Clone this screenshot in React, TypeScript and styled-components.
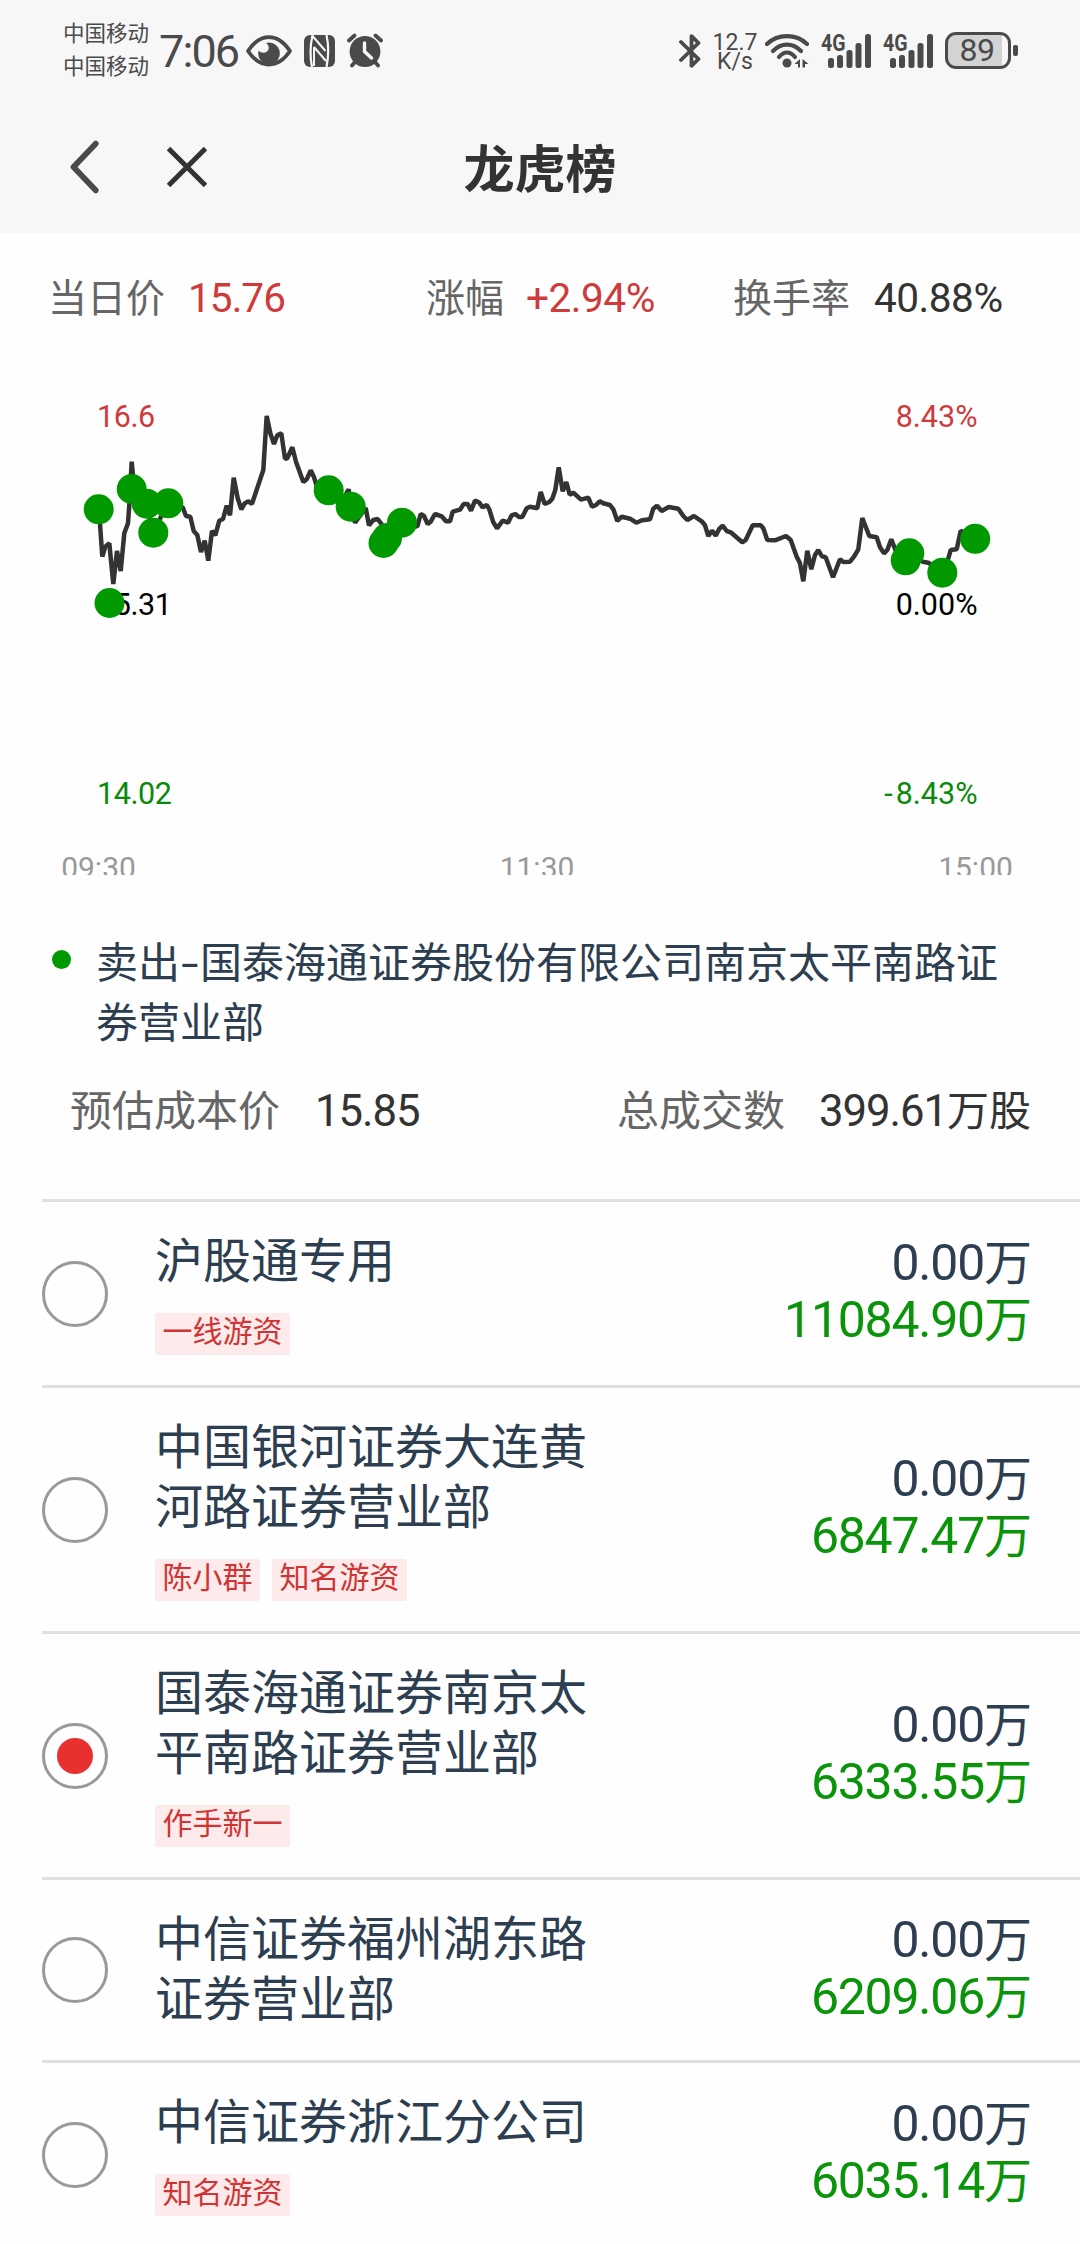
import React from "react";
import styled, { createGlobalStyle } from "styled-components";

const GlobalStyle = createGlobalStyle`
  * { box-sizing: border-box; }
  body {
    margin: 0;
    background: #fefefe;
    font-family: Roboto, "Noto Sans CJK SC", sans-serif;
    color: #2c3e50;
  }
`;

const Screen = styled.div`
  width: 1080px;
  height: 2244px;
  overflow: hidden;
  display: flex;
  flex-direction: column;
`;

const Top = styled.header`
  flex: none;
  height: 233px;
  background: #f7f7f7;
`;

const StatusBar = styled.div`
  display: flex;
  justify-content: space-between;
  height: 101px;
  padding: 0 62px 0 63px;
  color: #4a4a4a;
`;

const StatusGroup = styled.div`
  display: flex;
  align-items: center;
`;

const Carriers = styled.div`
  width: 96px;
  font-size: 21.5px;
  line-height: 33px;
  padding-bottom: 1px;
`;

const Clock = styled.div`
  width: 87px;
  font-size: 45px;
  line-height: 50px;
  letter-spacing: -1.9px;
  padding-top: 2px;
`;

const StatusIcon = styled.svg<{ $gap: number }>`
  display: block;
  flex: none;
  margin-left: ${(p) => p.$gap}px;
`;

const Speed = styled.div`
  width: 52px;
  margin-left: 7px;
  padding-top: 2px;
  font-size: 23px;
  line-height: 19px;
  text-align: center;
`;

const Battery = styled.div`
  display: flex;
  align-items: center;
  gap: 2px;
  margin-left: 12px;
`;

const BatteryBody = styled.div`
  width: 66px;
  height: 37px;
  border: 3px solid #4a4a4a;
  border-radius: 11px;
  background: linear-gradient(to right, #d3d3d3 54px, transparent 54px);
  font-size: 32px;
  line-height: 31px;
  letter-spacing: -0.5px;
  text-align: center;
  padding-right: 2px;
`;

const BatteryTip = styled.div`
  width: 5px;
  height: 11px;
  border-radius: 2px;
  background: #4a4a4a;
`;

const NavBar = styled.div`
  display: grid;
  grid-template-columns: 300px 1fr 300px;
  align-items: center;
  height: 132px;
`;

const NavButtons = styled.div`
  display: flex;
  gap: 65px;
  padding-left: 66px;
`;

const Title = styled.h1`
  margin: 8px 0 0;
  font-size: 51px;
  line-height: 70px;
  font-weight: 700;
  text-align: center;
  color: #333;
`;

const Quote = styled.section`
  flex: none;
  display: grid;
  grid-template-columns: 378px 307px 1fr;
  height: 130px;
  padding: 37px 0 0 48px;
  font-size: 39px;
  line-height: 58px;
`;

const Field = styled.div<{ $gap: number }>`
  display: flex;
  gap: ${(p) => p.$gap}px;
  white-space: nowrap;
`;

const Label = styled.span`
  color: #666;
`;

const Value = styled.span<{ $tone?: string }>`
  color: ${(p) => p.$tone ?? "#333"};
`;

const Num = styled.span<{ $tight?: boolean }>`
  font-size: 1.04em;
  line-height: 1;
  letter-spacing: ${(p) => (p.$tight ? "-0.024em" : "-0.012em")};
`;

const Chart = styled.svg`
  flex: none;
  display: block;
  overflow: hidden;
  font-size: 30.5px;
`;

const Seller = styled.section`
  flex: none;
  display: flex;
  gap: 25px;
  margin-top: 59px;
  padding: 0 60px 0 52px;
  font-size: 42px;
  line-height: 60px;
`;

const SellerDot = styled.i`
  flex: none;
  width: 19px;
  height: 19px;
  margin-top: 16px;
  border-radius: 50%;
  background: #009900;
`;

const Dash = styled.span`
  display: inline-block;
  width: 20px;
  text-align: center;
  transform: scaleX(1.5);
`;

const Totals = styled.section`
  flex: none;
  display: flex;
  justify-content: space-between;
  height: 145px;
  padding: 28px 49px 0 70px;
  font-size: 42px;
  line-height: 60px;
`;

const List = styled.ul`
  flex: none;
  list-style: none;
  margin: 0;
  padding: 0 0 0 42px;
`;

const Row = styled.li`
  display: flex;
  align-items: center;
  border-top: 3px solid #e0e0e0;
  padding: 30px 48px 30px 0;
`;

const Radio = styled.span<{ $on: boolean }>`
  flex: none;
  width: 66px;
  height: 66px;
  margin-right: 47px;
  border: 3px solid #999;
  border-radius: 50%;
  display: grid;
  place-items: center;

  &::after {
    content: "";
    width: 36px;
    height: 36px;
    border-radius: 50%;
    background: ${(p) => (p.$on ? "#e93030" : "transparent")};
  }
`;

const Branch = styled.div`
  width: 450px;
`;

const Name = styled.div`
  font-size: 48px;
  line-height: 60px;
`;

const Tags = styled.div`
  display: flex;
  gap: 12px;
  margin-top: 21px;
`;

const Tag = styled.span`
  height: 42px;
  padding: 0 7.5px;
  border-radius: 3px;
  background: #fdeaea;
  color: #d03434;
  font-size: 30px;
  line-height: 37px;
`;

const Amounts = styled.div`
  flex: 1;
  padding-bottom: 3px;
  font-size: 48px;
  line-height: 57px;
  text-align: right;
`;

const Amount = styled.div<{ $sell?: boolean }>`
  height: 57px;
  color: ${(p) => (p.$sell ? "#0a940a" : "#2c3e50")};
`;

const LINE =
  "99,509.3 102.3,556.7 105.3,546.7 109.3,543.3 113.3,584 117,551 120.7,571 124.3,533.3 128,523.3 129.3,505 131.7,461.7 134.3,490 146.7,503.7 153.3,532.7 161,516.7 168.3,503.3 182.7,507.3 186,516 190.3,516.7 193.7,531 197.3,535 201,552 204.7,540.7 208.3,560.7 212,530.7 215.3,535.3 219.3,520.7 223,519 226.7,505.7 230,515.3 233.7,477.7 237.7,498.3 241.3,509.3 244.7,503.3 248,501.3 252,503.7 263.3,470 266.7,416 270.3,433.3 274,444 277.3,435.3 281.3,433.3 285,458.7 287.3,458.3 292.3,447.3 296,461.7 303.3,482 306.7,479.3 310.7,470.3 314,477.3 318,490 328.7,490.7 342,501 348.7,489.3 350.7,506.7 355,522.7 365.7,508 369,525.3 373.3,520 377.7,519 381.7,524.3 385,541 402,522 413.3,525 417.3,526.7 420.7,514 424,516 427.7,524 430.7,521.7 435,514 441.7,516.3 446,521.3 450,521.3 452.7,511.7 460,509.7 463.7,504 467.7,504 471,510.7 475,500.7 479,502.3 482.7,507.3 486.7,505 489.3,509.3 493.3,522.3 497,528.3 502.7,520.7 508,522.7 511.7,515.3 515.3,514 519,517 522.3,517 526.7,508.3 530,506.7 537.3,508.3 540.7,492 544.7,504 549.3,502 552.3,498.7 555.3,490 558.7,467.3 562.7,491.3 566.3,482 569.7,494.7 573.3,492.7 581,499.7 588.3,497.7 592,506.7 596,505 599.7,501.3 603.3,503.3 610,505 613.3,509.3 617.3,521 621.7,516.7 630,518.7 636.3,522.7 642,520.3 650,519.3 653.3,508.7 657,505.7 661.7,511 668.7,507 678.3,508.7 683.3,516 687.3,520 694,516 701.7,521.3 705,525.3 708.3,536 712,530.7 715.7,535.7 719.3,528.7 722.7,525.7 726.7,531 730.7,532.3 742.3,542.3 745.7,540 752.7,525.3 760.7,525.3 763.3,528.3 767.3,540 775,540.3 786,536 790.7,540 796.7,556.7 800,563.3 803.3,581.3 807.3,550.7 811.3,569.3 815,555 818.3,550 821.7,556 825.7,557.3 833,577.3 840,559.3 843.3,562 850,561.7 854,556.7 858.3,549.3 862.3,518 869.3,536 876.7,537.3 880,547.3 884,553.3 887.3,550 891.3,539.3 896.7,553.3 909,553 922.7,561.7 928.3,562.7 942.3,572.7 948.3,558.3 950.7,550 956.7,549.3 960.7,530.7 975,539";

const TRADES: [number, number][] = [
  [98.7, 509.3], [109.5, 603], [131.7, 489], [146.7, 503.7], [153.3, 532.7],
  [168.3, 503.3], [328.7, 490.3], [350.7, 506.7], [383.5, 543], [387, 538],
  [402, 522.7], [909.3, 553.3], [905.7, 560.3], [942.3, 572.7], [975.2, 538.8],
];

const BRANCHES = [
  { name: "沪股通专用", tags: ["一线游资"], buy: "0.00", sell: "11084.90" },
  { name: "中国银河证券大连黄河路证券营业部", tags: ["陈小群", "知名游资"], buy: "0.00", sell: "6847.47" },
  { name: "国泰海通证券南京太平南路证券营业部", tags: ["作手新一"], buy: "0.00", sell: "6333.55", selected: true },
  { name: "中信证券福州湖东路证券营业部", tags: [], buy: "0.00", sell: "6209.06" },
  { name: "中信证券浙江分公司", tags: ["知名游资"], buy: "0.00", sell: "6035.14" },
];

function Signal({ gap }: { gap: number }) {
  const bars = [[7, 24], [16, 21], [25.5, 16], [34.5, 9], [44, 0]];
  return (
    <StatusIcon $gap={gap} width="50" height="44" viewBox="0 -4 50 44">
      <text x="0" y="17.5" fontSize="23.5" fontWeight="700" fill="#4a4a4a" textLength="24.5" lengthAdjust="spacingAndGlyphs">4G</text>
      {bars.map(([x, y]) => (
        <rect key={x} x={x} y={y + 1} width="6" height={34 - y} rx="2.5" fill="#4a4a4a" />
      ))}
    </StatusIcon>
  );
}

function EyeIcon() {
  return (
    <StatusIcon $gap={0} width="46" height="32" viewBox="0 0 46 32">
      <path d="M2 16C8 7 15 2.200 23 2.200S38 7 44 16C38 25 31 29.500 23 29.500S8 25 2 16Z" fill="none" stroke="#4a4a4a" strokeWidth="3.800" strokeLinejoin="round" />
      <path d="M20 8A10.800 10.800 0 1 1 12.600 15.500C14.500 18 18.500 18.500 21 16.500S23.500 10.500 20 8Z" fill="#4a4a4a" />
    </StatusIcon>
  );
}

function NfcIcon() {
  return (
    <StatusIcon $gap={12} width="31" height="32" viewBox="0 0 31 32">
      <rect width="31" height="32" rx="6" fill="#4a4a4a" />
      <path d="M8.500 0C6.500 9 6 22 8 32M22.500 0C24.500 9 24.500 22 22.500 32" fill="none" stroke="#f7f7f7" strokeWidth="2.200" />
      <path d="M8.500 1L21.500 16M10 12L22 26M10 12V31" fill="none" stroke="#f7f7f7" strokeWidth="2" />
    </StatusIcon>
  );
}

function AlarmIcon() {
  return (
    <StatusIcon $gap={12} width="36" height="35" viewBox="0 0 36 35">
      <circle cx="18" cy="18.500" r="15.400" fill="#4a4a4a" />
      <path d="M2 7.500L7.500 2.500M34 7.500L28.500 2.500M8 29L5 32.500M28 29L31 32.500" stroke="#4a4a4a" strokeWidth="3.800" strokeLinecap="round" />
      <path d="M17.500 10V18.500L24.500 25" fill="none" stroke="#f7f7f7" strokeWidth="3.400" strokeLinecap="round" strokeLinejoin="round" />
    </StatusIcon>
  );
}

function BluetoothIcon() {
  return (
    <StatusIcon $gap={0} width="23" height="36" viewBox="0 0 23 36">
      <path d="M2 9L19.500 26L12.500 32.800V3.200L19.500 10L2 27" fill="none" stroke="#4a4a4a" strokeWidth="3.800" strokeLinecap="round" strokeLinejoin="round" />
    </StatusIcon>
  );
}

function WifiIcon() {
  return (
    <StatusIcon $gap={4} width="44" height="36" viewBox="0 0 44 36">
      <g fill="none" stroke="#4a4a4a" strokeWidth="4.200" strokeLinecap="round">
        <path d="M2 11C13 0.500 31 0.500 42 11" />
        <path d="M8 18C16 9.500 28 9.500 36 18" />
        <path d="M14 24C19 18 25 18 30 24" />
      </g>
      <circle cx="22" cy="30" r="4.500" fill="#4a4a4a" />
      <path d="M29.500 31L35 26V34.500H33V31ZM37.500 26L43.500 31H40V34.500H37.500Z" fill="#4a4a4a" />
    </StatusIcon>
  );
}

export default function App() {
  return (
    <>
      <GlobalStyle />
      <Screen>
        <Top>
          <StatusBar>
            <StatusGroup>
              <Carriers>
                中国移动
                <br />
                中国移动
              </Carriers>
              <Clock>7:06</Clock>
              <EyeIcon />
              <NfcIcon />
              <AlarmIcon />
            </StatusGroup>
            <StatusGroup>
              <BluetoothIcon />
              <Speed>
                12.7
                <br />
                K/s
              </Speed>
              <WifiIcon />
              <Signal gap={12} />
              <Signal gap={12} />
              <Battery>
                <BatteryBody>89</BatteryBody>
                <BatteryTip />
              </Battery>
            </StatusGroup>
          </StatusBar>
          <NavBar>
            <NavButtons>
              <svg width="36" height="56" viewBox="0 0 36 56">
                <path d="M29.700 4.700L7.500 28L29.700 51.300" fill="none" stroke="#4a4a4a" strokeWidth="5.800" strokeLinecap="round" strokeLinejoin="round" />
              </svg>
              <svg width="40" height="56" viewBox="0 0 40 56">
                <path d="M1.500 9.500L38.500 46.500M38.500 9.500L1.500 46.500" stroke="#333" strokeWidth="5" />
              </svg>
            </NavButtons>
            <Title>龙虎榜</Title>
          </NavBar>
        </Top>

        <Quote>
          <Field $gap={23}>
            <Label>当日价</Label>
            <Value $tone="#cf3a3a"><Num $tight>15.76</Num></Value>
          </Field>
          <Field $gap={22}>
            <Label>涨幅</Label>
            <Value $tone="#cf3a3a"><Num>+2.94%</Num></Value>
          </Field>
          <Field $gap={24}>
            <Label>换手率</Label>
            <Value><Num>40.88%</Num></Value>
          </Field>
        </Quote>

        <Chart width="1080" height="512" viewBox="0 363 1080 512">
          <g letterSpacing="-0.4">
            <text x="97" y="427" fill="#cf3a3a">16.6</text>
            <text x="97" y="615" fill="#000">15.31</text>
            <text x="97" y="803.500" fill="#0a8a0a">14.02</text>
          </g>
          <g textAnchor="end">
            <text x="977.500" y="427" fill="#cf3a3a">8.43%</text>
            <text x="977.500" y="615" fill="#000">0.00%</text>
            <text x="977.500" y="803.500" fill="#0a8a0a">
              -<tspan dx="3">8.43%</tspan>
            </text>
          </g>
          <g textAnchor="middle" fill="#999" fontSize="30">
            <text x="98.500" y="877.500">09:30</text>
            <text x="537" y="877.500">11:30</text>
            <text x="975.500" y="877.500">15:00</text>
          </g>
          <polyline points={LINE} fill="none" stroke="#333" strokeWidth="4.500" strokeLinejoin="bevel" />
          {TRADES.map(([x, y]) => (
            <circle key={`${x}-${y}`} cx={x} cy={y} r="15" fill="#009900" />
          ))}
        </Chart>

        <Seller>
          <SellerDot />
          <div>
            卖出<Dash>-</Dash>国泰海通证券股份有限公司南京太平南路证券营业部
          </div>
        </Seller>

        <Totals>
          <Field $gap={35}>
            <Label>预估成本价</Label>
            <Value><Num $tight>15.85</Num></Value>
          </Field>
          <Field $gap={34}>
            <Label>总成交数</Label>
            <Value><Num $tight>399.61</Num>万股</Value>
          </Field>
        </Totals>

        <List>
          {BRANCHES.map((b) => (
            <Row key={b.name}>
              <Radio $on={!!b.selected} />
              <Branch>
                <Name>{b.name}</Name>
                {b.tags.length > 0 && (
                  <Tags>
                    {b.tags.map((t) => (
                      <Tag key={t}>{t}</Tag>
                    ))}
                  </Tags>
                )}
              </Branch>
              <Amounts>
                <Amount><Num $tight>{b.buy}</Num>万</Amount>
                <Amount $sell><Num $tight>{b.sell}</Num>万</Amount>
              </Amounts>
            </Row>
          ))}
        </List>
      </Screen>
    </>
  );
}
